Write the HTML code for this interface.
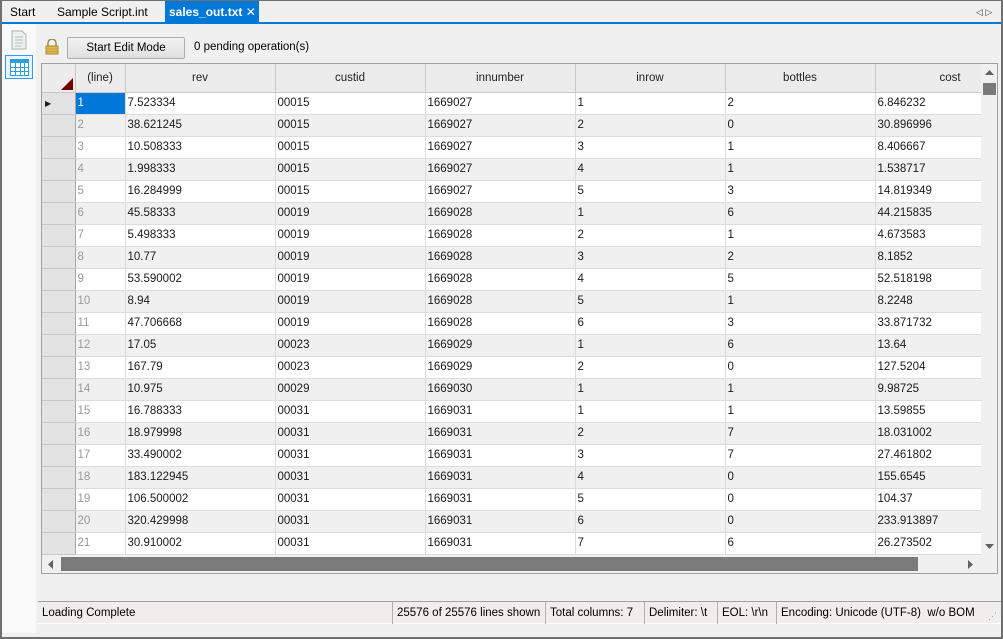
<!DOCTYPE html>
<html><head><meta charset="utf-8"><style>
*{margin:0;padding:0;box-sizing:border-box}
body{width:1003px;height:639px;overflow:hidden;background:#f0f0f0;font-family:"Liberation Sans",sans-serif;font-size:11.5px;color:#000;position:relative}
.a{position:absolute}
#frame{left:0;top:0;width:1003px;height:639px;border:2px solid #707070;border-top:1px solid #707070;}
#tabs{left:2px;top:1px;width:999px;height:22px;background:#f0f0f0}
.tab{position:absolute;top:0;height:22px;line-height:22px;font-size:12px}
#bl{left:2px;top:22px;width:999px;height:2px;background:#0078d7}
#left{left:2px;top:24px;width:34px;height:609px;background:#f9f9f9}
#grid{left:41px;top:63px;width:957px;height:511px;border:1px solid #a0a0a0;background:#fff;overflow:hidden}
table{border-collapse:collapse;table-layout:fixed;position:absolute;left:0;top:0;width:983px}
td,th{height:22px;border-right:1px solid #dcdcdc;border-bottom:1px solid #dcdcdc;white-space:nowrap;overflow:hidden;padding-left:2px;font-weight:normal;text-align:left;color:#1a1a1a}
th{height:28px;background:#ececec;text-align:center;border-right:1px solid #c8c8c8;border-bottom:1px solid #c8c8c8;color:#222;padding-left:0}
td.rh{background:#e3e3e3;border-right:1px solid #a8a8a8;border-bottom:1px solid #c8c8c8}
td.ln{color:#999}
tr.g td{background:#f0f0f0}
tr.g td.rh{background:#e3e3e3}
#vs{left:939px;top:0;width:17px;height:491px;background:#f0f0f0}
#hs{left:0;top:491px;width:956px;height:18px;background:#f0f0f0}
#status{left:38px;top:601px;width:963px;height:23px;border-top:1px solid #a0a0a0;background:#f0eeec;border-bottom:1px solid #fff}
.st{position:absolute;top:0;height:22px;line-height:22px;font-size:11.5px;padding-left:4px;border-left:1px solid #b0b0b0;white-space:nowrap}
</style></head><body>
<div class="a" id="tabs">
<div class="tab" style="left:8px">Start</div>
<div class="tab" style="left:55px">Sample Script.int</div>
<div class="tab" style="left:163px;width:94px;background:#0078d7;color:#fff;font-weight:bold;padding-left:4px">sales_out.txt <span style="font-weight:normal">✕</span></div>
<div class="tab" style="left:974px;font-size:9px;color:#444">◁ ▷</div>
</div>
<div class="a" id="bl"></div>
<div class="a" id="left">
<svg class="a" style="left:9px;top:6px" width="16" height="20"><path d="M1 1h10l4 4v14H1z" fill="#eef1f1" stroke="#a9b2b2"/><path d="M4 7h8M4 10h8M4 13h8M4 16h6" stroke="#b8c0c0"/></svg>
<div class="a" style="left:3px;top:31px;width:28px;height:24px;border:1px solid #3399ff;background:#eaf4fc"></div>
<svg class="a" style="left:8px;top:35px" width="19" height="17"><rect x="0.5" y="0.5" width="18" height="16" fill="#fff" stroke="#2aa0d8"/><rect x="0" y="0" width="19" height="4" fill="#2aa0d8"/><path d="M0 8.5h19M0 12.5h19M5.5 0v17M10.5 0v17M14.5 0v17" stroke="#2aa0d8"/></svg>
</div>
<svg class="a" style="left:45px;top:39px" width="14" height="16"><path d="M3 7V4a4 4 0 0 1 8 0v3" fill="none" stroke="#9a8a50" stroke-width="1.5"/><rect x="1" y="7" width="12" height="8" fill="#e0b84c" stroke="#a98a30"/><path d="M2 10h10M2 12.5h10" stroke="#c9a040"/></svg>
<div class="a" style="left:67px;top:37px;width:118px;height:22px;border:1px solid #adadad;border-radius:2px;background:linear-gradient(#f2f2f2,#e0e0e0);text-align:center;line-height:20px">Start Edit Mode</div>
<div class="a" style="left:194px;top:41px">0 pending operation(s)</div>
<div class="a" id="grid">
<table>
<colgroup><col style="width:33px"><col style="width:50px"><col style="width:150px"><col style="width:150px"><col style="width:150px"><col style="width:150px"><col style="width:150px"><col style="width:150px"></colgroup>
<tr><th style="position:relative;background:#ececec"><svg style="position:absolute;right:2px;bottom:2px" width="12" height="12"><path d="M12 0V12H0z" fill="#700000"/></svg></th><th>(line)</th><th>rev</th><th>custid</th><th>innumber</th><th>inrow</th><th>bottles</th><th>cost</th></tr>
<tr><td class="rh" style="font-size:8px;padding-left:3px">▶</td><td class="ln" style="background:#0078d7;color:#fff">1</td><td>7.523334</td><td>00015</td><td>1669027</td><td>1</td><td>2</td><td>6.846232</td></tr>
<tr class="g"><td class="rh"></td><td class="ln">2</td><td>38.621245</td><td>00015</td><td>1669027</td><td>2</td><td>0</td><td>30.896996</td></tr>
<tr><td class="rh"></td><td class="ln">3</td><td>10.508333</td><td>00015</td><td>1669027</td><td>3</td><td>1</td><td>8.406667</td></tr>
<tr class="g"><td class="rh"></td><td class="ln">4</td><td>1.998333</td><td>00015</td><td>1669027</td><td>4</td><td>1</td><td>1.538717</td></tr>
<tr><td class="rh"></td><td class="ln">5</td><td>16.284999</td><td>00015</td><td>1669027</td><td>5</td><td>3</td><td>14.819349</td></tr>
<tr class="g"><td class="rh"></td><td class="ln">6</td><td>45.58333</td><td>00019</td><td>1669028</td><td>1</td><td>6</td><td>44.215835</td></tr>
<tr><td class="rh"></td><td class="ln">7</td><td>5.498333</td><td>00019</td><td>1669028</td><td>2</td><td>1</td><td>4.673583</td></tr>
<tr class="g"><td class="rh"></td><td class="ln">8</td><td>10.77</td><td>00019</td><td>1669028</td><td>3</td><td>2</td><td>8.1852</td></tr>
<tr><td class="rh"></td><td class="ln">9</td><td>53.590002</td><td>00019</td><td>1669028</td><td>4</td><td>5</td><td>52.518198</td></tr>
<tr class="g"><td class="rh"></td><td class="ln">10</td><td>8.94</td><td>00019</td><td>1669028</td><td>5</td><td>1</td><td>8.2248</td></tr>
<tr><td class="rh"></td><td class="ln">11</td><td>47.706668</td><td>00019</td><td>1669028</td><td>6</td><td>3</td><td>33.871732</td></tr>
<tr class="g"><td class="rh"></td><td class="ln">12</td><td>17.05</td><td>00023</td><td>1669029</td><td>1</td><td>6</td><td>13.64</td></tr>
<tr><td class="rh"></td><td class="ln">13</td><td>167.79</td><td>00023</td><td>1669029</td><td>2</td><td>0</td><td>127.5204</td></tr>
<tr class="g"><td class="rh"></td><td class="ln">14</td><td>10.975</td><td>00029</td><td>1669030</td><td>1</td><td>1</td><td>9.98725</td></tr>
<tr><td class="rh"></td><td class="ln">15</td><td>16.788333</td><td>00031</td><td>1669031</td><td>1</td><td>1</td><td>13.59855</td></tr>
<tr class="g"><td class="rh"></td><td class="ln">16</td><td>18.979998</td><td>00031</td><td>1669031</td><td>2</td><td>7</td><td>18.031002</td></tr>
<tr><td class="rh"></td><td class="ln">17</td><td>33.490002</td><td>00031</td><td>1669031</td><td>3</td><td>7</td><td>27.461802</td></tr>
<tr class="g"><td class="rh"></td><td class="ln">18</td><td>183.122945</td><td>00031</td><td>1669031</td><td>4</td><td>0</td><td>155.6545</td></tr>
<tr><td class="rh"></td><td class="ln">19</td><td>106.500002</td><td>00031</td><td>1669031</td><td>5</td><td>0</td><td>104.37</td></tr>
<tr class="g"><td class="rh"></td><td class="ln">20</td><td>320.429998</td><td>00031</td><td>1669031</td><td>6</td><td>0</td><td>233.913897</td></tr>
<tr><td class="rh"></td><td class="ln">21</td><td>30.910002</td><td>00031</td><td>1669031</td><td>7</td><td>6</td><td>26.273502</td></tr>
<tr class="g"><td class="rh"></td><td class="ln">22</td><td></td><td></td><td></td><td></td><td></td><td></td></tr>
</table>
<div class="a" id="vs">
<svg class="a" style="left:4px;top:6px" width="9" height="6"><path d="M0 5L4.5 0L9 5z" fill="#606060"/></svg>
<div class="a" style="left:2px;top:19px;width:13px;height:12px;background:#7a7a7a"></div>
<svg class="a" style="left:4px;top:480px" width="9" height="6"><path d="M0 0L4.5 5L9 0z" fill="#606060"/></svg>
</div>
<div class="a" id="hs">
<svg class="a" style="left:6px;top:5px" width="6" height="9"><path d="M5 0L0 4.5L5 9z" fill="#606060"/></svg>
<div class="a" style="left:19px;top:2px;width:857px;height:14px;background:#7a7a7a"></div>
<svg class="a" style="left:926px;top:5px" width="6" height="9"><path d="M0 0L5 4.5L0 9z" fill="#606060"/></svg>
</div>
</div>
<div class="a" id="status">
<div class="st" style="left:0;border-left:none">Loading Complete</div>
<div class="st" style="left:354px">25576 of 25576 lines shown</div>
<div class="st" style="left:507px">Total columns: 7</div>
<div class="st" style="left:606px">Delimiter: \t</div>
<div class="st" style="left:679px">EOL: \r\n</div>
<div class="st" style="left:738px">Encoding: Unicode (UTF-8)&nbsp; w/o BOM</div>
<div class="a" style="left:950px;top:9px;font-size:9px;color:#999;letter-spacing:-1px">⋰</div>
</div>
<div class="a" id="frame"></div>
</body></html>
